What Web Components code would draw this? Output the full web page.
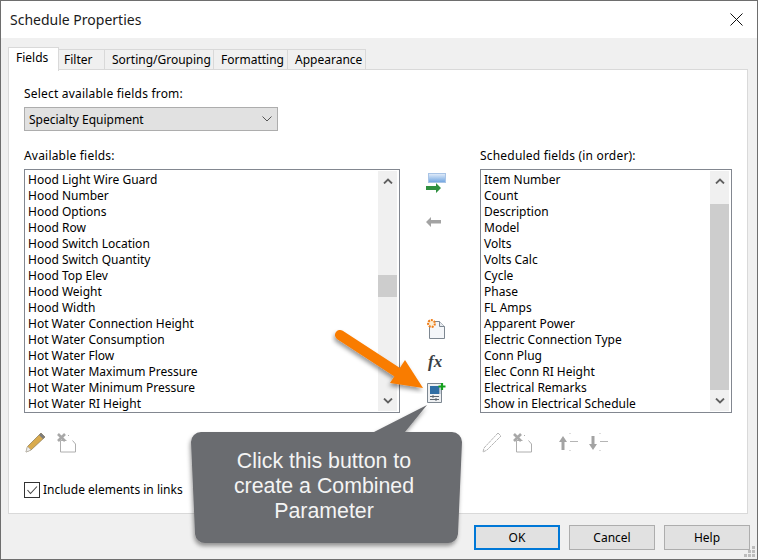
<!DOCTYPE html>
<html>
<head>
<meta charset="utf-8">
<title>Schedule Properties</title>
<style>
  html, body { margin: 0; padding: 0; background: #f0f0f0; }
  body { font: 12px "Noto Sans", "Liberation Sans", sans-serif; color: #000; }
</style>
</head>
<body>
<schedule-dialog>
  <span slot="title">Schedule Properties</span>

  <dialog-tabs slot="tabs">
    <span class="active">Fields</span>
    <span>Filter</span>
    <span>Sorting/Grouping</span>
    <span>Formatting</span>
    <span>Appearance</span>
  </dialog-tabs>

  <combo-box slot="source" label="Select available fields from:" value="Specialty Equipment"></combo-box>

  <field-list slot="left" label="Available fields:" width="376" thumb-top="104" thumb-height="22"
    items="Hood Light Wire Guard|Hood Number|Hood Options|Hood Row|Hood Switch Location|Hood Switch Quantity|Hood Top Elev|Hood Weight|Hood Width|Hot Water Connection Height|Hot Water Consumption|Hot Water Flow|Hot Water Maximum Pressure|Hot Water Minimum Pressure|Hot Water RI Height"></field-list>

  <field-list slot="right" label="Scheduled fields (in order):" width="252" thumb-top="33" thumb-height="186"
    items="Item Number|Count|Description|Model|Volts|Volts Calc|Cycle|Phase|FL Amps|Apparent Power|Electric Connection Type|Conn Plug|Elec Conn RI Height|Electrical Remarks|Show in Electrical Schedule"></field-list>

  <tool-icon slot="middle" name="add" style="margin-top:3px"></tool-icon>
  <tool-icon slot="middle" name="remove" style="margin-top:18px"></tool-icon>
  <tool-icon slot="middle" name="param" style="margin-top:87px"></tool-icon>
  <tool-icon slot="middle" name="fx" style="margin-top:9px"></tool-icon>
  <tool-icon slot="middle" name="combined" style="margin-top:7px"></tool-icon>

  <tool-icon slot="left-tools" name="pencil"></tool-icon>
  <tool-icon slot="left-tools" name="delete"></tool-icon>

  <tool-icon slot="right-tools" name="pencil-off"></tool-icon>
  <tool-icon slot="right-tools" name="delete"></tool-icon>
  <tool-icon slot="right-tools" name="up" style="margin-left:16px"></tool-icon>
  <tool-icon slot="right-tools" name="down"></tool-icon>

  <check-box slot="check">Include elements in links</check-box>

  <dialog-button slot="buttons" default>OK</dialog-button>
  <dialog-button slot="buttons">Cancel</dialog-button>
  <dialog-button slot="buttons">Help</dialog-button>

  <note-callout slot="overlay">Click this button to create a Combined Parameter</note-callout>
</schedule-dialog>

<script>
const ICONS = {
  add: `<svg width="24" height="24" viewBox="0 0 24 24">
    <defs><linearGradient id="g" x1="0" y1="0" x2="0" y2="1"><stop offset="0" stop-color="#e4eefa"/><stop offset="1" stop-color="#6ea3e0"/></linearGradient></defs>
    <rect x="5.500" y="1.500" width="17" height="9" fill="url(#g)" stroke="#a9c4e6"/>
    <path d="M3 14h10v-3l5 5-5 5v-3H3z" fill="#2f8f3f"/></svg>`,
  remove: `<svg width="24" height="16" viewBox="0 0 24 16">
    <path d="M18 6H8V3L3 8l5 5v-3.500h10z" fill="#a3a3a3"/></svg>`,
  param: `<svg width="24" height="24" viewBox="0 0 24 24">
    <path d="M6.500 4.500h10l5 5v12h-15z" fill="#f4f6f9" stroke="#7d8791"/>
    <path d="M16.500 4.500v5h5" fill="#e6e9ee" stroke="#7d8791"/>
    <circle cx="8.500" cy="6.500" r="3.400" fill="#fbeed6" stroke="#ef7d1a" stroke-width="2" stroke-dasharray="2 1"/></svg>`,
  fx: `<svg width="24" height="24" viewBox="0 0 24 24">
    <text x="5" y="17" font-family="Liberation Serif, serif" font-style="italic" font-weight="700" font-size="17" fill="#3a3f45">fx</text></svg>`,
  combined: `<svg width="24" height="24" viewBox="0 0 24 24">
    <path d="M4.500 2.500h14v19h-14z" fill="#eef0f2" stroke="#7d8791"/>
    <rect x="7" y="5" width="9" height="8" fill="#2f6ea5"/>
    <rect x="16" y="6" width="1.500" height="7" fill="#9fb4c8"/>
    <path d="M7 15.500h9M7 18.500h9M10 14v3M13 17v3" stroke="#5c6670" fill="none"/>
    <path d="M19 2v7M15.500 5.500h7" stroke="#14a01e" stroke-width="2.200"/></svg>`,
  pencil: `<svg width="24" height="24" viewBox="0 0 24 24">
    <path d="M17 3l4 4L7 20l-5 2 1.500-5.500z" fill="#d9ab4e" stroke="#8a7a55" stroke-width=".7"/>
    <path d="M17 3l4 4-2 2-4-4z" fill="#7d7d7d"/>
    <path d="M2 22l1.500-5.500L7 20z" fill="#eee" stroke="#aaa" stroke-width=".5"/></svg>`,
  "pencil-off": `<svg width="24" height="24" viewBox="0 0 24 24">
    <path d="M18 3l3 3L7 20l-4 2 1-4z" fill="#fff" stroke="#b5b5b5" stroke-dasharray="3 .6"/></svg>`,
  delete: `<svg width="24" height="24" viewBox="0 0 24 24">
    <path d="M6.500 10.500v11.500h15v-8l-3-3.500" fill="none" stroke="#aeaeae"/>
    <path d="M14 5.500h1" stroke="#aeaeae"/><path d="M6.500 10.500h6" stroke="#aeaeae"/>
    <path d="M4 4l7 7M11 4l-7 7" stroke="#a8a8a8" stroke-width="2.600"/></svg>`,
  up: `<svg width="24" height="24" viewBox="0 0 24 24">
    <path d="M7 6l-4 6h2.500v8h3v-8H11z" fill="#a3a3a3"/>
    <path d="M14 11.500h8" stroke="#b5b5b5"/><path d="M14 3v1M14 20v1" stroke="#bbb"/></svg>`,
  down: `<svg width="24" height="24" viewBox="0 0 24 24">
    <path d="M7 20l-4-6h2.500V6h3v8H11z" fill="#a3a3a3"/>
    <path d="M14 11.500h8" stroke="#b5b5b5"/><path d="M14 3v1M14 20v1" stroke="#bbb"/></svg>`
};

class ToolIcon extends HTMLElement {
  constructor() {
    super();
    const shadow = this.attachShadow({ mode: "open" });
    shadow.innerHTML = `
      <style>
        :host { display: block; line-height: 0; }
      </style>
      ${ICONS[this.getAttribute("name")] || ""}
    `;
  }
}

class DialogTabs extends HTMLElement {
  constructor() {
    super();
    const shadow = this.attachShadow({ mode: "open" });
    const names = [...this.querySelectorAll("span")];
    const widths = [51, 46, 109, 74, 78];
    shadow.innerHTML = `
      <style>
        :host { display: flex; align-items: flex-end; height: 24px; }
        .tab {
          box-sizing: border-box;
          height: 21px;
          padding-left: 7px;
          background: #f0f0f0;
          border: 1px solid #d9d9d9;
          border-left: 0;
          display: flex;
          align-items: center;
        }
        .tab.active {
          height: 24px;
          background: #fff;
          border-left: 1px solid #d9d9d9;
          border-bottom: 0;
          margin-bottom: -1px;
          position: relative;
          padding-bottom: 4px;
        }
      </style>
      ${names.map((n, i) => `<div class="tab ${n.className}" style="width:${widths[i]}px${n.textContent === "Filter" ? ";padding-left:5px" : ""}">${n.textContent}</div>`).join("")}
    `;
  }
}

class ComboBox extends HTMLElement {
  constructor() {
    super();
    const shadow = this.attachShadow({ mode: "open" });
    shadow.innerHTML = `
      <style>
        :host { display: block; }
        .label { height: 16px; line-height: 18px; margin-bottom: 6px; letter-spacing: .2px; }
        .box {
          box-sizing: border-box;
          width: 254px;
          height: 24px;
          padding: 0 5px 0 4px;
          display: flex;
          align-items: center;
          justify-content: space-between;
          background: #e1e1e1;
          border: 1px solid #adadad;
        }
      </style>
      <div class="label">${this.getAttribute("label")}</div>
      <div class="box">
        <span>${this.getAttribute("value")}</span>
        <svg width="10" height="6" viewBox="0 0 10 6"><path d="M.5.500L5 5 9.500.500" fill="none" stroke="#555"/></svg>
      </div>
    `;
  }
}

class FieldList extends HTMLElement {
  constructor() {
    super();
    const shadow = this.attachShadow({ mode: "open" });
    const items = this.getAttribute("items").split("|");
    const top = this.getAttribute("thumb-top");
    const height = this.getAttribute("thumb-height");
    shadow.innerHTML = `
      <style>
        :host { display: block; width: ${this.getAttribute("width")}px; }
        .label { height: 16px; line-height: 18px; margin-bottom: 6px; letter-spacing: .2px; }
        .box {
          box-sizing: border-box;
          height: 244px;
          display: flex;
          border: 1px solid #828790;
          background: #fff;
          padding: 1px;
        }
        .items { flex: 1; padding: 1px 0 0 2px; overflow: hidden; }
        .item { height: 16px; line-height: 16px; white-space: nowrap; }
        .bar { position: relative; width: 19px; margin-right: 1px; background: #f0f0f0; }
        .thumb { position: absolute; left: 0; right: 0; background: #cdcdcd; top: ${top}px; height: ${height}px; }
        svg { position: absolute; left: 5px; }
      </style>
      <div class="label">${this.getAttribute("label")}</div>
      <div class="box">
        <div class="items">${items.map(t => `<div class="item">${t}</div>`).join("")}</div>
        <div class="bar">
          <svg style="top:7px" width="10" height="6" viewBox="0 0 10 6"><path d="M1 5.500L5 1.500l4 4" fill="none" stroke="#606060" stroke-width="1.800"/></svg>
          <div class="thumb"></div>
          <svg style="bottom:7px" width="10" height="6" viewBox="0 0 10 6"><path d="M1 .500l4 4 4-4" fill="none" stroke="#606060" stroke-width="1.800"/></svg>
        </div>
      </div>
    `;
  }
}

class CheckBox extends HTMLElement {
  constructor() {
    super();
    const shadow = this.attachShadow({ mode: "open" });
    shadow.innerHTML = `
      <style>
        :host { display: flex; align-items: center; gap: 3px; }
        .box {
          box-sizing: border-box;
          width: 16px;
          height: 16px;
          border: 1px solid #333;
          background: #fff;
          line-height: 0;
        }
      </style>
      <div class="box"><svg width="14" height="14" viewBox="0 0 14 14"><path d="M2.500 7l3 3.500L12 3.500" fill="none" stroke="#444" stroke-width="1.100"/></svg></div>
      <slot></slot>
    `;
  }
}

class DialogButton extends HTMLElement {
  constructor() {
    super();
    const shadow = this.attachShadow({ mode: "open" });
    shadow.innerHTML = `
      <style>
        :host {
          box-sizing: border-box;
          display: flex;
          align-items: center;
          justify-content: center;
          width: 86px;
          height: 25px;
          background: #e1e1e1;
          border: 1px solid #adadad;
        }
        :host([default]) { border: 2px solid #0078d7; }
      </style>
      <slot></slot>
    `;
  }
}

class NoteCallout extends HTMLElement {
  constructor() {
    super();
    const shadow = this.attachShadow({ mode: "open" });
    shadow.innerHTML = `
      <style>
        :host { position: absolute; left: 0; top: 0; width: 758px; height: 560px; pointer-events: none; display: block; }
        .shapes { position: absolute; left: 0; top: 0; }
        .body {
          position: absolute;
          left: 188px;
          top: 431px;
          box-sizing: border-box;
          width: 270px;
          height: 108px;
          padding: 0 30px;
          display: flex;
          align-items: center;
          justify-content: center;
          text-align: center;
          color: #f4f4f4;
          font: 21.33px/25px "Liberation Sans", sans-serif;
        }
      </style>
      <svg class="shapes" width="758" height="560">
        <defs>
          <filter id="s" x="-10%" y="-10%" width="120%" height="120%">
            <feDropShadow dx="-1" dy="3" stdDeviation="2" flood-color="#000" flood-opacity=".4"/>
          </filter>
        </defs>
        <path filter="url(#s)" d="M200 431H373L426 404L404 431H451a10 10 0 0 1 10 10L457 533a10 10 0 0 1-10 9H204a10 10 0 0 1-10-9L190 441a10 10 0 0 1 10-10z" fill="#6b6c70"/>
        <g filter="url(#s)">
          <path d="M339 334L402 375" stroke="#f97c00" stroke-width="10" stroke-linecap="round" fill="none"/>
          <path d="M404 359L422 387L389 382z" fill="#f97c00"/>
        </g>
      </svg>
      <div class="body"><slot></slot></div>
    `;
  }
}

class ScheduleDialog extends HTMLElement {
  constructor() {
    super();
    const shadow = this.attachShadow({ mode: "open" });
    shadow.innerHTML = `
      <style>
        :host {
          position: relative;
          box-sizing: border-box;
          display: flex;
          flex-direction: column;
          width: 758px;
          height: 560px;
          background: #f0f0f0;
          border: 1px solid #6e6e6e;
          overflow: hidden;
        }
        .titlebar {
          height: 37px;
          flex: none;
          background: #fff;
          padding-left: 9px;
          display: flex;
          align-items: center;
          justify-content: space-between;
          font-size: 14px;
          color: #1a1a1a;
        }
        .close { margin-right: 14px; line-height: 0; }
        .content { flex: none; padding: 8px 0 0 7px; }
        .panel {
          box-sizing: border-box;
          width: 740px;
          height: 445px;
          margin-top: -1px;
          background: #fff;
          border: 1px solid #d9d9d9;
          padding: 15px 15px 0;
        }
        .lists {
          margin-top: 16px;
          display: grid;
          grid-template-columns: 376px 80px 252px;
        }
        .middle { display: flex; flex-direction: column; align-items: center; padding: 22px 10px 0 0; }
        .tools { display: grid; grid-template-columns: 376px 80px 252px; margin-top: 17px; height: 30px; }
        .tool-group { display: flex; gap: 6px; }
        .check { margin-top: 21px; }
        .buttons { display: flex; justify-content: flex-end; gap: 9px; margin-top: 11px; padding-right: 7px; }
        .grip { position: absolute; right: 1px; bottom: 1px; line-height: 0; }
      </style>
      <div class="titlebar">
        <slot name="title"></slot>
        <div class="close"><svg width="13" height="13" viewBox="0 0 13 13"><path d="M.5.500l12 12M12.500.500l-12 12" stroke="#111" fill="none"/></svg></div>
      </div>
      <div class="content">
        <slot name="tabs"></slot>
        <div class="panel">
          <slot name="source"></slot>
          <div class="lists">
            <slot name="left"></slot>
            <div class="middle"><slot name="middle"></slot></div>
            <slot name="right"></slot>
          </div>
          <div class="tools">
            <div class="tool-group"><slot name="left-tools"></slot></div>
            <div></div>
            <div class="tool-group"><slot name="right-tools"></slot></div>
          </div>
          <div class="check"><slot name="check"></slot></div>
        </div>
      </div>
      <div class="buttons"><slot name="buttons"></slot></div>
      <svg class="grip" width="12" height="12" viewBox="0 0 12 12" fill="#bdbdbd">
        <rect x="8" y="0" width="3" height="3"/><rect x="4" y="4" width="3" height="3"/><rect x="8" y="4" width="3" height="3"/>
        <rect x="0" y="8" width="3" height="3"/><rect x="4" y="8" width="3" height="3"/><rect x="8" y="8" width="3" height="3"/>
      </svg>
      <slot name="overlay"></slot>
    `;
  }
}

customElements.define("tool-icon", ToolIcon);
customElements.define("dialog-tabs", DialogTabs);
customElements.define("combo-box", ComboBox);
customElements.define("field-list", FieldList);
customElements.define("check-box", CheckBox);
customElements.define("dialog-button", DialogButton);
customElements.define("note-callout", NoteCallout);
customElements.define("schedule-dialog", ScheduleDialog);
</script>
</body>
</html>
